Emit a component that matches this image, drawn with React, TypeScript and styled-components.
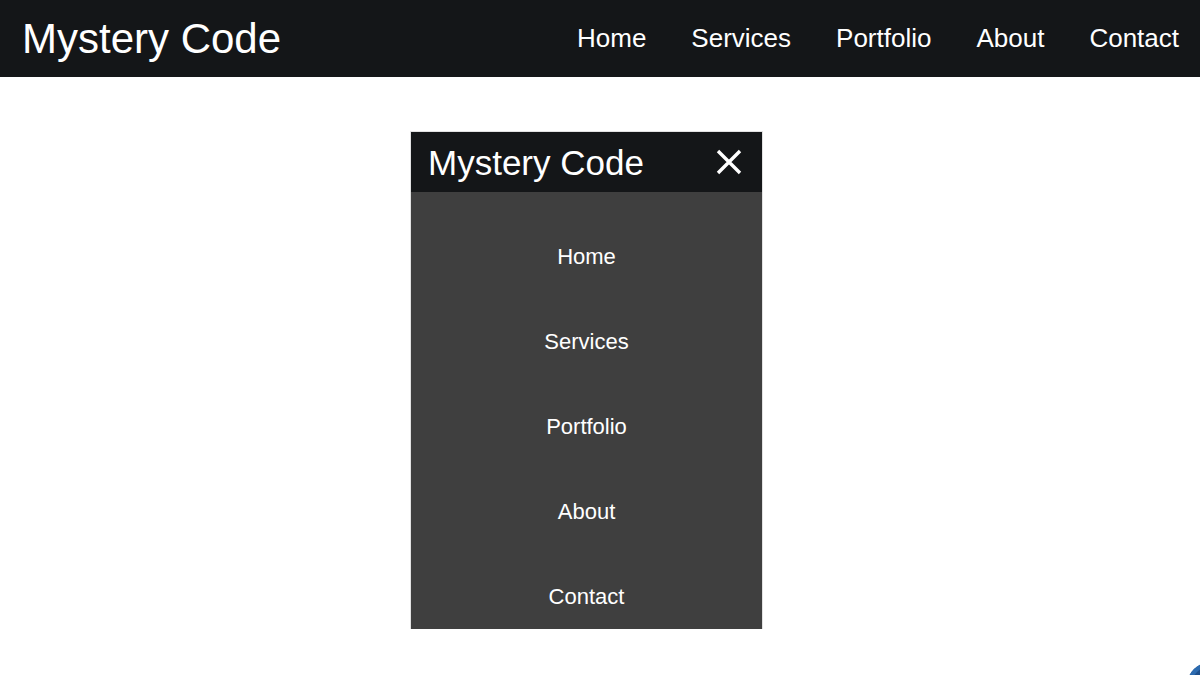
import React from "react";
import styled, { createGlobalStyle } from "styled-components";

const Global = createGlobalStyle`
  html, body { margin: 0; padding: 0; background: #ffffff; }
  body { font-family: "Liberation Sans", Arial, sans-serif; overflow: hidden; }
  * { box-sizing: border-box; }
`;

const Page = styled.div`
  width: 1200px;
  height: 675px;
  position: relative;
  overflow: hidden;
  background: #ffffff;
`;

const NavBar = styled.header`
  height: 77px;
  background: #141618;
  display: flex;
  align-items: center;
  justify-content: space-between;
  padding: 0 21px 0 22px;
`;

const Brand = styled.div<{ $size: number }>`
  color: #ffffff;
  font-size: ${(p) => p.$size}px;
  line-height: 1;
  white-space: nowrap;
`;

const NavLinks = styled.nav`
  display: flex;
  align-items: center;
  gap: 45px;
  margin-top: -2px;
`;

const NavLink = styled.a`
  color: #ffffff;
  font-size: 26px;
  text-decoration: none;
  line-height: 1;
`;

const Main = styled.main`
  padding: 54px 0 0 410px;
`;

const Panel = styled.div`
  width: 353px;
  height: 498px;
  overflow: hidden;
  border: 1px solid #e2e2e2;
  border-bottom: none;
  display: flex;
  flex-direction: column;
  background: #3f3f3f;
`;

const PanelHeader = styled.div`
  height: 60px;
  flex-shrink: 0;
  background: #141618;
  display: flex;
  align-items: center;
  justify-content: space-between;
  padding: 0 20px 0 17px;
`;

const CloseButton = styled.button`
  width: 26px;
  height: 26px;
  padding: 0;
  border: none;
  background: transparent;
  display: flex;
  align-items: center;
  justify-content: center;
  cursor: pointer;
`;

const MenuList = styled.ul`
  list-style: none;
  margin: 0;
  padding: 22px 0 0;
  display: flex;
  flex-direction: column;
`;

const MenuItem = styled.li`
  height: 85px;
  flex-shrink: 0;
  display: flex;
  align-items: center;
  justify-content: center;
  color: #ffffff;
  font-size: 22px;
`;

const Fab = styled.div`
  position: absolute;
  left: 1187px;
  top: 662px;
  width: 48px;
  height: 48px;
  border-radius: 50%;
  background: #1d4f8c;
  box-shadow: inset 3px 3px 0 #2c6bb0;
`;

const links = ["Home", "Services", "Portfolio", "About", "Contact"];

export default function App() {
  return (
    <Page>
      <Global />
      <NavBar>
        <Brand $size={42}>Mystery Code</Brand>
        <NavLinks>
          {links.map((l) => (
            <NavLink key={l} href="#">
              {l}
            </NavLink>
          ))}
        </NavLinks>
      </NavBar>
      <Main>
        <Panel>
          <PanelHeader>
            <Brand $size={35}>Mystery Code</Brand>
            <CloseButton aria-label="Close">
              <svg width="26" height="26" viewBox="0 0 26 26">
                <path
                  d="M2 2 L24 24 M24 2 L2 24"
                  stroke="#ffffff"
                  strokeWidth="3.4"
                  strokeLinecap="butt"
                />
              </svg>
            </CloseButton>
          </PanelHeader>
          <MenuList>
            {links.map((l) => (
              <MenuItem key={l}>{l}</MenuItem>
            ))}
          </MenuList>
        </Panel>
      </Main>
      <Fab />
    </Page>
  );
}
